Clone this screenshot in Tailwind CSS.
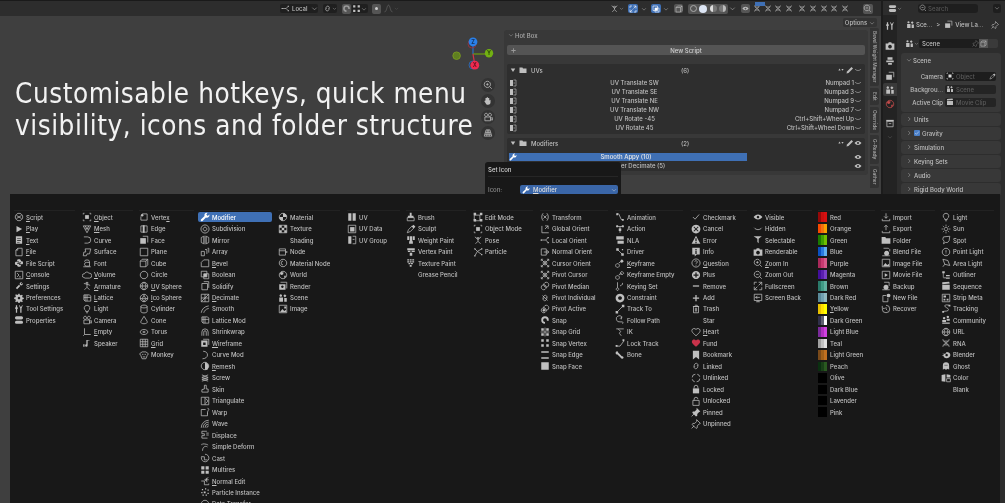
<!DOCTYPE html>
<html lang="en">
<head>
<meta charset="UTF-8" />
<title>Hot Box</title>
<script src="https://cdn.jsdelivr.net/npm/@tailwindcss/browser@4"></script>
</head>
<body class="bg-[#3f3f3f]">
<div class="relative w-[1005px] h-[503px] overflow-hidden flex bg-[#3f3f3f] text-[#bfbfbf] font-['Inter',sans-serif] font-medium text-[6px] blur-[0.35px]">

  <!-- 3d viewport -->
  <div class="w-[881px] h-full flex flex-col">
    <div class="h-[16px] shrink-0 flex items-center bg-[#2d2d2d] border-t border-[#1a1a1a]">
      <div class="ml-[280px] w-[38px] h-[9px] flex items-center gap-[2px] pl-[1px] bg-[#1f1f1f] rounded-[2px]">
        <span data-i="local" class="w-[9px] h-[9px]"></span><span class="flex-1">Local</span><span data-i="chev" class="w-[7px] h-[7px]"></span>
      </div>
      <div class="ml-[5px] w-[14px] h-[9px] flex items-center bg-[#1f1f1f] rounded-[2px]"><span data-i="linked" class="w-[9px] h-[9px]"></span><span data-i="chev" class="w-[5px] h-[5px]"></span></div>
      <div class="ml-[5px] w-[9px] h-[10px] flex items-center bg-[#555555] rounded-[2px] text-[#999999]"><span data-i="snap" class="w-[9px] h-[9px]"></span></div>
      <div class="ml-[1px] w-[16px] h-[9px] flex items-center bg-[#1f1f1f] rounded-[2px]"><span data-i="snapvertex" class="w-[9px] h-[9px]"></span><span data-i="chev" class="w-[6px] h-[6px]"></span></div>
      <div class="ml-[4px] w-[9px] h-[10px] flex items-center justify-center bg-[#555555] rounded-[2px]"><span class="w-[3px] h-[3px] rounded-full bg-[#cccccc]"></span></div>
      <div class="ml-[2px] text-[#666666] flex items-center"><span data-i="falloff" class="w-[11px] h-[9px]"></span><span data-i="chev" class="w-[5px] h-[5px]"></span></div>

      <div class="ml-[211px] flex items-center"><span data-i="pose" class="w-[9px] h-[9px]"></span><span data-i="chev" class="w-[5px] h-[5px]"></span></div>
      <div class="ml-[4px] w-[10px] h-[9px] bg-[#3f70b5] rounded-[2px] flex items-center justify-center text-white"><span data-i="fullscreen" class="w-[8px] h-[8px]"></span></div>
      <span data-i="chev" class="ml-[3px] w-[6px] h-[6px]"></span>
      <div class="ml-[4px] w-[10px] h-[9px] bg-[#3f70b5] rounded-[2px] flex items-center justify-center text-white"><span data-i="bool" class="w-[8px] h-[8px]"></span></div>
      <span data-i="chev" class="ml-[2px] w-[6px] h-[6px]"></span>
      <div class="ml-[5px] w-[9px] h-[9px] bg-[#555555] rounded-[2px] flex items-center justify-center"><span data-i="cube" class="w-[8px] h-[8px]"></span></div>
      <div class="ml-[5px] w-[40px] h-[10px] bg-[#545454] rounded-[2px] flex items-center justify-around px-[1px]">
        <span class="w-[7px] h-[7px] rounded-full border border-[#aaaaaa]"></span>
        <span class="w-[8px] h-[8px] rounded-full bg-[#dde6f5]"></span>
        <span class="w-[7px] h-[7px] rounded-full bg-[linear-gradient(90deg,#dddddd_50%,#777777_50%)]"></span>
        <span class="w-[7px] h-[7px] rounded-full bg-[linear-gradient(90deg,#777777_50%,#bbbbbb_50%)]"></span>
      </div>
      <span data-i="chev" class="ml-[1px] w-[7px] h-[7px]"></span>
      <div class="ml-[5px] w-[9px] h-[9px] bg-[#555555] rounded-[2px] flex items-center justify-center"><span data-i="visible" class="w-[7px] h-[7px]"></span></div>
      <div class="relative flex items-center ml-[3px] gap-[2.6px]">
        <span class="absolute left-[2px] -top-[1.5px] w-[10px] h-[4px] bg-[#3f70b5]"></span>
        <span data-i="rna" class="w-[8px] h-[11px]"></span><span data-i="rna" class="w-[8px] h-[11px]"></span><span data-i="rna" class="w-[8px] h-[11px]"></span><span data-i="rna" class="w-[8px] h-[11px]"></span>
        <span data-i="rna" class="ml-[3px] w-[8px] h-[11px]"></span><span data-i="rna" class="w-[8px] h-[11px]"></span><span data-i="rna" class="w-[8px] h-[11px]"></span><span data-i="rna" class="w-[8px] h-[11px]"></span><span data-i="rna" class="w-[8px] h-[11px]"></span>
      </div>
      <div class="ml-[14px] w-[10px] h-[10px] bg-[#555555] rounded-[2px] flex items-center justify-center"><span data-i="zoomout" class="w-[9px] h-[9px]"></span></div>
    </div>

    <div class="relative flex-1 flex min-h-0">
      <h1 class="w-[481px] shrink-0 pl-[15px] pt-[62px] text-[27.6px] leading-[32px] tracking-[0.55px] font-normal text-[#f2f2f2] font-['DejaVu_Sans_Condensed','DejaVu_Sans',sans-serif] whitespace-nowrap">Customisable hotkeys, quick menu<br>visibility, icons and folder structure</h1>

      <!-- navigation gizmo -->
      <svg class="absolute left-[450px] top-[18px] w-[46px] h-[40px]" viewBox="450 34 46 40">
        <path d="M473 54v-10" stroke="#2a70c8" stroke-width="1.2"/>
        <path d="M473 54h14" stroke="#6ea00f" stroke-width="1.2"/>
        <path d="M473 54l1.5 9" stroke="#d8324a" stroke-width="1.2"/>
        <circle cx="472" cy="44" r="4" fill="none" stroke="#a03040" stroke-width=".8"/>
        <circle cx="473" cy="65" r="4" fill="none" stroke="#2a70c8" stroke-width=".8"/>
        <circle cx="456.6" cy="55.7" r="3.8" fill="#5f7f20" stroke="#7ea020" stroke-width=".8"/>
        <circle cx="473" cy="41.8" r="4.4" fill="#2a80e8"/>
        <circle cx="489" cy="53.2" r="4.2" fill="#72b012"/>
        <circle cx="474.8" cy="65.2" r="4.4" fill="#f02a50"/>
        <text x="473" y="44" text-anchor="middle" font-size="5.5" font-weight="700" fill="#16315c">Z</text>
        <text x="489" y="55.2" text-anchor="middle" font-size="5.5" font-weight="700" fill="#2c4a08">Y</text>
        <text x="474.8" y="67.2" text-anchor="middle" font-size="5.5" font-weight="700" fill="#6a1020">X</text>
      </svg>

      <!-- viewport nav buttons -->
      <div class="w-[14px] shrink-0 pt-[62px] flex flex-col gap-[2px]">
        <span class="w-[14px] h-[14px] rounded-full bg-[#333333] flex items-center justify-center"><span data-i="zoomin" class="w-[10px] h-[10px]"></span></span>
        <span class="w-[14px] h-[14px] rounded-full bg-[#333333] flex items-center justify-center"><span data-i="hand" class="w-[10px] h-[10px]"></span></span>
        <span class="w-[14px] h-[14px] rounded-full bg-[#333333] flex items-center justify-center"><span data-i="camera" class="w-[10px] h-[10px]"></span></span>
        <span class="w-[14px] h-[14px] rounded-full bg-[#333333] flex items-center justify-center"><span data-i="persp" class="w-[10px] h-[10px]"></span></span>
      </div>

      <!-- n-panel -->
      <div class="ml-[9px] flex-1 min-w-0 flex flex-col">
        <div class="h-[14px] pt-[2px] flex justify-end pr-[4px] shrink-0">
          <div class="w-[34px] h-[9px] bg-[#333333] rounded-[2px] flex items-center justify-center gap-[2px]">Options<span data-i="chev" class="w-[6px] h-[6px]"></span></div>
        </div>
        <div class="flex gap-[2px]">
          <div class="w-[364px] h-[145px] bg-[#383838] rounded-[3px] px-[3px] flex flex-col">
            <div class="h-[15px] pb-[5px] flex items-center gap-[1px] pl-[1px] shrink-0 text-[#aaaaaa]"><span data-i="chev" class="w-[6px] h-[6px]"></span>Hot Box</div>
            <div class="h-[10px] shrink-0 bg-[#545454] rounded-[2px] flex items-center pl-[3px] text-[#d0d0d0]"><span data-i="add" class="w-[7px] h-[7px] text-[#999999]"></span><span class="flex-1 text-center pr-[10px]">New Script</span></div>

            <!-- UVs -->
            <div class="mt-[9px] h-[70px] shrink-0 bg-[#2e2e2e] rounded-[2px] flex flex-col">
              <div class="h-[14px] pb-[2px] flex items-center pl-[3px] pr-[3px] shrink-0">
                <span data-i="tridown" class="w-[6px] h-[6px]"></span><span data-i="folder" class="ml-[3px] w-[8px] h-[8px]"></span><span class="ml-[4px] w-[150px]">UVs</span><span>(6)</span>
                <span class="ml-auto flex items-center"><span data-i="updown" class="w-[8px] h-[6px]"></span><span data-i="pencil" class="ml-[1px] w-[8px] h-[8px]"></span><span data-i="hidden" class="w-[8px] h-[8px]"></span></span>
              </div>
              <div class="h-[9px] flex items-center pl-[2px] pr-[3px]"><span data-i="uvdoc" class="w-[8px] h-[8px]"></span><span class="w-[235px] text-center">UV Translate SW</span><span class="flex-1 text-right">Numpad 1</span><span data-i="hidden" class="w-[8px] h-[8px]"></span></div>
              <div class="h-[9px] flex items-center pl-[2px] pr-[3px]"><span data-i="uvdoc" class="w-[8px] h-[8px]"></span><span class="w-[235px] text-center">UV Translate SE</span><span class="flex-1 text-right">Numpad 3</span><span data-i="hidden" class="w-[8px] h-[8px]"></span></div>
              <div class="h-[9px] flex items-center pl-[2px] pr-[3px]"><span data-i="uvdoc" class="w-[8px] h-[8px]"></span><span class="w-[235px] text-center">UV Translate NE</span><span class="flex-1 text-right">Numpad 9</span><span data-i="hidden" class="w-[8px] h-[8px]"></span></div>
              <div class="h-[9px] flex items-center pl-[2px] pr-[3px]"><span data-i="uvdoc" class="w-[8px] h-[8px]"></span><span class="w-[235px] text-center">UV Translate NW</span><span class="flex-1 text-right">Numpad 7</span><span data-i="hidden" class="w-[8px] h-[8px]"></span></div>
              <div class="h-[9px] flex items-center pl-[2px] pr-[3px]"><span data-i="uvdoc" class="w-[8px] h-[8px]"></span><span class="w-[235px] text-center">UV Rotate -45</span><span class="flex-1 text-right">Ctrl+Shift+Wheel Up</span><span data-i="hidden" class="w-[8px] h-[8px]"></span></div>
              <div class="h-[9px] flex items-center pl-[2px] pr-[3px]"><span data-i="uvdoc" class="w-[8px] h-[8px]"></span><span class="w-[235px] text-center">UV Rotate 45</span><span class="flex-1 text-right">Ctrl+Shift+Wheel Down</span><span data-i="hidden" class="w-[8px] h-[8px]"></span></div>
            </div>

            <!-- Modifiers -->
            <div class="mt-[4px] h-[33px] shrink-0 bg-[#2e2e2e] rounded-[2px] flex flex-col">
              <div class="h-[14px] pb-[4px] flex items-center pl-[3px] pr-[3px] shrink-0">
                <span data-i="tridown" class="w-[6px] h-[6px]"></span><span data-i="folder" class="ml-[3px] w-[8px] h-[8px]"></span><span class="ml-[4px] w-[150px]">Modifiers</span><span>(2)</span>
                <span class="ml-auto flex items-center"><span data-i="updown" class="w-[8px] h-[6px]"></span><span data-i="pencil" class="ml-[1px] w-[8px] h-[8px]"></span><span data-i="visible" class="w-[8px] h-[8px]"></span></span>
              </div>
              <div class="h-[9px] flex items-center pl-[2px] pr-[3px]"><div class="w-[238px] h-[8px] bg-[#3f70b5] flex items-center text-[#e8e8e8]"><span data-i="wrench" class="w-[8px] h-[8px] text-white"></span><span class="flex-1 text-center pr-[12px]">Smooth Appy (10)</span></div><span data-i="visible" class="ml-auto w-[8px] h-[8px]"></span></div>
              <div class="h-[9px] flex items-center pl-[2px] pr-[3px]"><span class="w-[246px] text-center">Smoother Decimate (5)</span><span data-i="visible" class="ml-auto w-[8px] h-[8px]"></span></div>
            </div>
          </div>

          <!-- sidebar tabs -->
          <div class="w-[9px] flex flex-col gap-[2px] -mt-[2px] text-[#a8a8a8]">
            <div class="h-[58px] bg-[#333333] rounded-r-[2px] flex items-center justify-center"><span class="[writing-mode:vertical-rl] text-[4.8px] whitespace-nowrap">Bevel Weight Manager</span></div>
            <div class="h-[17px] bg-[#333333] rounded-r-[2px] flex items-center justify-center"><span class="[writing-mode:vertical-rl] text-[4.8px]">Edit</span></div>
            <div class="h-[26px] bg-[#333333] rounded-r-[2px] flex items-center justify-center"><span class="[writing-mode:vertical-rl] text-[4.8px]">Override</span></div>
            <div class="h-[29px] bg-[#333333] rounded-r-[2px] flex items-center justify-center"><span class="[writing-mode:vertical-rl] text-[4.8px] whitespace-nowrap">G-Ready</span></div>
            <div class="h-[22px] bg-[#333333] rounded-r-[2px] flex items-center justify-center"><span class="[writing-mode:vertical-rl] text-[4.8px]">Gather</span></div>
          </div>
        </div>
      </div>
    </div>
  </div>

  <!-- properties editor -->
  <div class="flex-1 min-w-0 flex flex-col border-l-2 border-[#1c1c1c] bg-[#2d2d2d]">
    <div class="h-[15px] shrink-0 flex items-center border-t border-[#1a1a1a]">
      <span data-i="props" class="ml-[5px] w-[9px] h-[9px]"></span><span data-i="chev" class="w-[5px] h-[5px]"></span>
      <div class="ml-[16px] w-[60px] h-[9px] bg-[#1e1e1e] rounded-[3px] flex items-center pl-[1px] gap-[1px] text-[#555555]"><span data-i="zoomout" class="w-[8px] h-[8px] text-[#bbbbbb]"></span>Search</div>
      <div class="ml-[15px] w-[8px] h-[9px] bg-[#1e1e1e] rounded-[2px] flex items-center justify-center"><span data-i="chev" class="w-[6px] h-[6px]"></span></div>
    </div>
    <div class="flex-1 flex min-h-0">
      <div class="w-[14px] shrink-0 bg-[#232323] flex flex-col items-center pt-[6px]">
        <span data-i="tools" class="h-[10px] w-[10px]"></span>
        <span class="h-[10px]"></span>
        <span data-i="renderable" class="h-[10px] w-[10px]"></span>
        <span class="h-[5px]"></span>
        <span data-i="printer" class="h-[10px] w-[10px]"></span>
        <span class="h-[5px]"></span>
        <span data-i="viewlayer" class="h-[10px] w-[10px]"></span>
        <span class="h-[2px] w-full"></span>
        <span class="w-full h-[13px] bg-[#3a3a3a] flex items-center justify-center rounded-l-[2px]"><span data-i="scene" class="h-[10px] w-[10px]"></span></span>
        <span class="h-[3px]"></span>
        <span data-i="world" class="h-[10px] w-[10px] text-[#c04a4a]"></span>
        <span class="h-[9px]"></span>
        <span data-i="archive" class="h-[10px] w-[10px]"></span>
        <span class="h-[6px]"></span>
        <span data-i="chev" class="h-[6px] w-[6px] text-[#666666]"></span>
      </div>
      <div class="flex-1 min-w-0 px-[4px] flex flex-col">
        <div class="h-[19px] mb-[4px] shrink-0 flex items-center pl-[5px] whitespace-nowrap">
          <span data-i="scene" class="w-[9px] h-[9px]"></span><span class="ml-[1px]">Sce...</span><span class="ml-[4px]">&gt;</span><span data-i="viewlayer" class="ml-[4px] w-[9px] h-[9px]"></span><span class="ml-[2px]">View La...</span><span data-i="unpinned" class="ml-auto mr-[2px] w-[8px] h-[8px]"></span>
        </div>
        <div class="h-[10px] shrink-0 flex items-center pl-[4px]">
          <span data-i="scene" class="w-[9px] h-[9px]"></span><span data-i="chev" class="w-[5px] h-[5px]"></span>
          <div class="w-[60px] h-[9px] bg-[#1d1d1d] rounded-l-[2px] flex items-center pl-[3px]">Scene<span data-i="unpinned" class="ml-auto w-[7px] h-[7px] text-[#777777]"></span></div>
          <div class="w-[9px] h-[9px] bg-[#555555] flex items-center justify-center"><span data-i="cube" class="w-[7px] h-[7px]"></span></div>
          <div class="w-[10px] h-[9px] bg-[#3a3a3a] rounded-r-[2px]"></div>
        </div>
        <div class="mt-[5px] h-[58.5px] shrink-0 bg-[#383838] rounded-[3px] flex flex-col">
          <div class="h-[16.5px] pb-[2px] flex items-center pl-[5px] gap-[1px]"><span data-i="chev" class="w-[6px] h-[6px]"></span>Scene</div>
          <div class="h-[13px] flex items-center"><span class="w-[44px] text-right pr-[2px]">Camera</span><div class="w-[51px] h-[9px] bg-[#1d1d1d] rounded-[2px] flex items-center pl-[1px] gap-[2px] text-[#5a5a5a]"><span data-i="object" class="w-[8px] h-[8px] text-[#dddddd]"></span>Object<span data-i="sculpt" class="ml-auto w-[7px] h-[7px] text-[#bbbbbb]"></span></div></div>
          <div class="h-[13px] flex items-center"><span class="w-[44px] text-right pr-[2px] whitespace-nowrap">Backgrou...</span><div class="w-[51px] h-[9px] bg-[#1d1d1d]/70 rounded-[2px] flex items-center pl-[1px] gap-[2px] text-[#5a5a5a]"><span data-i="scene" class="w-[8px] h-[8px] text-[#bbbbbb]"></span>Scene</div></div>
          <div class="h-[13px] flex items-center"><span class="w-[44px] text-right pr-[2px] whitespace-nowrap">Active Clip</span><div class="w-[51px] h-[9px] bg-[#1d1d1d]/70 rounded-[2px] flex items-center pl-[1px] gap-[2px] text-[#5a5a5a]"><span data-i="sequence" class="w-[8px] h-[8px] text-[#bbbbbb]"></span>Movie Clip</div></div>
        </div>
        <div class="mt-[1px] h-[13px] shrink-0 bg-[#383838] rounded-[3px] flex items-center pl-[5px] gap-[2px]"><span data-i="chevr" class="w-[6px] h-[6px]"></span>Units</div>
        <div class="mt-[1px] h-[13px] shrink-0 bg-[#383838] rounded-[3px] flex items-center pl-[5px] gap-[2px]"><span data-i="chevr" class="w-[6px] h-[6px]"></span><span class="w-[6px] h-[6px] bg-[#4a7fc8] rounded-[1px] flex items-center justify-center text-white"><span data-i="check" class="w-[6px] h-[6px]"></span></span>Gravity</div>
        <div class="mt-[1px] h-[13px] shrink-0 bg-[#383838] rounded-[3px] flex items-center pl-[5px] gap-[2px]"><span data-i="chevr" class="w-[6px] h-[6px]"></span>Simulation</div>
        <div class="mt-[1px] h-[13px] shrink-0 bg-[#383838] rounded-[3px] flex items-center pl-[5px] gap-[2px]"><span data-i="chevr" class="w-[6px] h-[6px]"></span>Keying Sets</div>
        <div class="mt-[1px] h-[13px] shrink-0 bg-[#383838] rounded-[3px] flex items-center pl-[5px] gap-[2px]"><span data-i="chevr" class="w-[6px] h-[6px]"></span>Audio</div>
        <div class="mt-[1px] h-[13px] shrink-0 bg-[#383838] rounded-[3px] flex items-center pl-[5px] gap-[2px]"><span data-i="chevr" class="w-[6px] h-[6px]"></span>Rigid Body World</div>
      </div>
    </div>
  </div>

  <!-- Set Icon dialog -->
  <div class="absolute left-[485px] top-[162px] w-[136px] h-[32px] bg-[#181818] rounded-t-[3px] px-[3px] flex flex-col">
    <div class="h-[15px] shrink-0 flex items-center border-b border-[#262626] text-[#d4d4d4]">Set Icon</div>
    <div class="mt-[8px] flex items-center"><span class="w-[32px] text-[#8a8a8a]">Icon:</span><div class="w-[98px] h-[9px] bg-[#3a66a8] rounded-[2px] flex items-center pl-[2px] gap-[3px] text-[#dddddd]"><span data-i="wrench" class="w-[8px] h-[8px] text-white"></span><span><u>M</u>odifier</span><span data-i="chev" class="ml-auto mr-[1px] w-[6px] h-[6px]"></span></div></div>
  </div>

  <!-- icon picker popup -->
  <div id="picker" class="absolute left-[10px] top-[194px] w-[990px] h-[309px] bg-[#181818] pl-[4px] pt-[15px] flex overflow-hidden"></div>
</div>

<script>
  // icons: 16x16 paths, "|" starts a new path, "!" means filled
  const icons = {
    chev:'M3 6l5 5 5-5', chevr:'M6 3l5 5-5 5', tridown:'!M2 4h12l-6 9z', updown:'!M1 9h6L4 4zM9 5h6l-3 5z',
    pencil:'!M11 2l3 3-9 9-4 1 1-4z', hand:'!M4 7V3h2v3V2h2v4V3h2v4l2-1v4c0 2-1 4-4 4-2 0-3-1-4-3L2 8z', persp:'M5 3h6l3 10H2zM4 7h8M3 10h10M7 3l-1 10M9 3l1 10',
    falloff:'M1 14c4 0 4-12 7-12s3 12 7 12', uvdoc:'!M2 2h6v12H2z|M9 2h5v12H9M9 8h3', printer:'!M4 2h8v4H4zM2 7h12v3H2zM5 11h6v3H5z', viewlayer:'M6 2h8v8|!M2 6h9v8H2z', archive:'!M2 3h12v3H2z|M3 6v8h10V6M6 9h4',
    local:'M2 8h7M9 8l4-4M9 8l4 4|!M1 7h2v2H1zM12 3h2v2h-2zM12 11h2v2h-2z',
    script:'M8 2a6 6 0 1 0 .01 0M4 5.5l8 5M4 10.5l8-5', play:'!M4 3l9 5-9 5z', text:'!M3 2h10v12H3zM5 5v1h6V5zM5 8v1h6V8zM5 11v1h4v-1z', file:'M6 2h7v12H3V5zM6 2v3H3',
    filescript:'!M8 2c-3 0-3 1-3 3h3v1H3c-2 0-2 5 0 5h2V9c0-1 1-2 2-2h3c1 0 1-1 1-1V4c0-1-1-2-3-2zM8 14c3 0 3-1 3-3H8v-1h5c2 0 2-5 0-5h-2v2c0 1-1 2-2 2H6c-1 0-1 1-1 1v2c0 1 1 2 3 2z',
    console:'M2 2h12v12H2zM5 5l3 3-3 3M8 11h3', settings:'!M3 11l5-5 2 2-5 5zM9 5a3 3 0 0 1 4-3l-2 2 1 1 2-2a3 3 0 0 1-3 4z',
    prefs:'!M7 1h2l.4 2 1.6.7 1.7-1.1 1.4 1.4-1.1 1.7.7 1.6 2 .4v2l-2 .4-.7 1.6 1.1 1.7-1.4 1.4-1.7-1.1-1.6.7-.4 2H7l-.4-2-1.6-.7-1.7 1.1-1.4-1.4 1.1-1.7-.7-1.6-2-.4V7l2-.4.7-1.6L1.9 3.3 3.3 1.9l1.7 1.1 1.6-.7zM8 6a2 2 0 1 0 .01 0z',
    tools:'!M3 2h2v3h1v3H5v6H3V8H2V5h1zM9 2l2 3 2-3h1l-2 5v7h-2V7L8 2z', props:'!M4 2h8a2.5 2.5 0 0 1 0 5H4a2.5 2.5 0 0 1 0-5zM4 9h8a2.5 2.5 0 0 1 0 5H4a2.5 2.5 0 0 1 0-5z',
    object:'M4 2H2v2M12 2h2v2M4 14H2v-2M12 14h2v-2|!M5 5h6v6H5z', mesh:'M2 3h12l-6 11zM5 3l3 5 3-5M5 8h6', curve:'M3 3h6a5 5 0 0 1 0 10H4', surface:'M5 3h9l-2 8H8l-1 3H2l1-6h3z', font:'M4 6a4 3 0 0 1 8 0v7H7a3 3 0 0 1 0-6h5M2 14h12',
    volume:'M3 12a3 3 0 0 1 1-6 4 4 0 0 1 7-1 4 4 0 0 1 1 8H5z', armature:'M8 2a1.5 1.5 0 1 0 .01 0M8 5L3 4M8 5l5 2M8 5v5l-4 4M8 10l4 4', lattice:'M3 3h9l2 2v8H5l-2-2zM3 7h11M8 3v10M5 13V3', light:'M8 2a4.5 4.5 0 0 0-2 8.5V12h4v-1.5A4.5 4.5 0 0 0 8 2zM6.5 14h3',
    camera:'M5 2a2.5 2.5 0 1 0 .01 0M11 2a2.5 2.5 0 1 0 .01 0M3 8h9v6H3zM12 10l3-1v4l-3-1', empty:'M4 2v10h10M4 12l-2 2', speaker:'!M7 3h5v1H9v8a2 2 0 1 1-2-2zM2 10h2v4H2z',
    vertex:'M5 3h8v10H3V7|!M3 5a2 2 0 1 1 4 0 2 2 0 0 1-4 0z', edge:'M3 3h10v10H3z|!M6 2h3v12H6z', face:'M6 2h8v10|!M2 5h9v9H2z', plane:'M2 2h12v12H2z', cube:'M2 5h9v9H2zM2 5l3-3h9v9l-3 3M11 5l3-3', circle:'M8 2a6 6 0 1 0 .01 0',
    uvsphere:'M8 2a6 6 0 1 0 .01 0M2 8h12M8 2c-4 3-4 9 0 12M8 2c4 3 4 9 0 12', ico:'M8 2a6 6 0 1 0 .01 0M8 4l3 5H5zM8 2v2M2 9h3M11 9h3M5 9l3 5 3-5', cyl:'M3 4c0-3 10-3 10 0v8c0 3-10 3-10 0zM3 4c0 3 10 3 10 0', cone:'M8 2l5 8c1 3-2 4-5 4s-6-1-5-4z', torus:'M8 4c8 0 8 8 0 8s-8-8 0-8M6 8c0 1 4 1 4 0s-4-1-4 0', grid:'M2 2h12v12H2zM2 6h12M2 10h12M6 2v12M10 2v12', monkey:'M5 3h6l4 3-2 3-2 5H5L3 9 1 6zM5 7h2M9 7h2M6 11h4',
    wrench:'!M11 1a4 4 0 0 0-3.7 5.5L1.5 12a1.8 1.8 0 0 0 2.5 2.5l5.5-5.8A4 4 0 0 0 15 4l-2.6 2.2L10 4l2.2-2.8A4 4 0 0 0 11 1z', subdiv:'M8 1.5a6.5 6.5 0 1 0 .01 0M8 5a3 3 0 1 0 .01 0', mirror:'M2 4l4-2v12l-4-2zM14 4l-4-2v12l4-2zM8 1v14', array:'M2 7h5v7H2zM8 4h3v7M12 2h2v7', bevel:'M6 3h8v11H2V7z', bool:'M2 2h9v9H2zM6 6h8v8H6z|!M6 6h5v5H6z', solid:'M3 4h9v10H3zM6 1h8v10', decimate:'M2 2h12v12H2zM2 14L14 2M8 2v6H2M14 8H8v6', smooth:'M2 14C3 8 7 4 14 3M6 14c1-3 3-6 8-7', shrink:'M3 14V8a5 5 0 0 1 10 0v6M6 14V8a2 2 0 0 1 4 0v6', wire:'M5 2h9v9|!M2 4h10v10H2zM5 7v4h4V7z', curvemod:'M5 2c5 0 7 3 7 6s-3 6-8 6', remesh:'M8 2a6 6 0 1 0 .01 0|!M8 2v12h4l2-6-2-4z', screw:'M3 3l10 4-10 3 10 3M13 3L3 7l10 3-10 3', skin:'M7 2h3v6h3v5H3V9l4-1z', triang:'M2 2h12v12H2zM8 2v12|M9 4l4 4-4 4', warp:'M9 4H2v10h10V8M12 2a2 2 0 0 1 2 2c0 1.5-2 2-2 4M12 10v1', wave:'M2 14A12 12 0 0 1 14 2M5 14a9 9 0 0 1 9-9M8 14a6 6 0 0 1 6-6M11 14a3 3 0 0 1 3-3', displace:'M3 2h8M3 2v4h4v3H3v4h9M10 5h4M10 8h4', simple:'M4 3c5 0 8 1 9 2M4 14c0-5 3-7 5-7s3 1 3 1M3 3v2', cast:'M8 2a6 6 0 1 1-5 3M3 6h4v5h5', multires:'!M2 2h5v5H2zM9 2h5v5H9zM2 9h5v5H2zM9 9h5v5H9z', normaledit:'M2 8h5v6h7v-2M8 8l5-6M10 3l1 7M7 6h7', particleinst:'!M3 3h2v2H3zM8 2h2v2H8zM12 4h2v2h-2zM2 8h2v2H2zM6 7h3v3H6zM12 9h2v2h-2zM4 12h2v2H4zM9 12h2v2H9z',
    material:'M8 2a6 6 0 1 0 .01 0|!M8 2a6 6 0 0 1 6 6H8v6a6 6 0 0 1-6-6h6z', texture:'M2 2h12v12H2z|!M2 2h4v4H2zM10 2h4v4h-4zM6 6h4v4H6zM2 10h4v4H2zM10 10h4v4h-4z', node:'M2 3h10v10H2zM2 6h10|!M12 7h3v2h-3z', matnode:'M8 2a6 6 0 1 0 .01 0M8 5a3 3 0 0 0 0 6', world:'M8 2a6 6 0 1 0 .01 0|!M5 3l4 1-1 3-3 1-2-2zM10 9h3l-2 4-1-1z', render:'M4 2h10v10|!M2 5h10v9H2zM7 7a2 2 0 1 0 .01 0z', scene:'!M11 2l2.5 2.5L11 7 8.5 4.5zM4.5 2a2 2 0 1 1-.1 0zM2 7h6v7H2zM10 8h4v6h-4z', image:'M2 2h12v12H2z|!M3 13l4-5 3 3 3-2v4zM10 4h3v3h-3z',
    uv:'!M2 2h5v12H2zM9 2h5v12H9z', uvdata:'M2 2h12v12H2z|!M5 5h7v7H5z', uvgroup:'M9 2h5v12H9M9 7h3|!M2 2h5v12H2z',
    brush:'M2 9h11v5H2z|!M6 1h3v5H6zM3 6h9v3H3z', sculpt:'M2 14l2-5 6-6 3 3-6 6z|!M9 4l3-3 3 3-3 3z', weight:'!M2 2h3v6H2zM6 2h4v8H6zM11 2h3v6h-3zM5 10h6v4H5z', vertexpaint:'!M2 2h12v3H2zM3 6h4v2H3zM9 6h5v2H9zM6 9h4v5H6z', texpaint:'!M2 2h3v2H2zM6 2h3v2H6zM10 2h3v2h-3zM2 5h3v2H2zM6 5h3v2H6zM10 5h3v2h-3zM4 8h3v2H4zM8 8h3v2H8zM6 11h3v3H6z',
    editmode:'M2 5h9v9H2z|!M1 1h4v4H1zM11 1h4v4h-4zM1 11h4v4H1zM11 11h4v4h-4z', pose:'M8 4a1.5 1.5 0 1 0 .01 0M3 3l5 4 5-4M8 7v3l-4 4M8 10l4 4', particle:'M3 3l4 4-4 7M7 7l7 5M14 3L7 7|!M2 2h2v2H2zM13 2h2v2h-2zM2 13h2v2H2zM13 11h2v2h-2z',
    transform:'M5 2C2 5 2 11 5 14M11 2c3 3 3 9 0 12M5.5 5.5l5 5M10.5 5.5l-5 5', global:'M3 14V3M3 14h11M8 3h5v5M8 8l5-5', localo:'M2 8h7M9 8l4-4M9 8l4 4|!M1 7h2v2H1zM12 3h2v2h-2zM12 11h2v2h-2z', normal:'M2 3h8v10H2zM6 8h8M11 5l3 3-3 3', cursoro:'M2 2l12 12M14 2L2 14M5 2H2v3M11 2h3v3M2 11v3h3M14 11v3h-3M8 5a3 3 0 1 0 .01 0', median:'M10 2a4 4 0 1 0 .01 0M6 6a4 4 0 1 0 .01 0', indiv:'M6 9a3 3 0 0 1 0-4l1-1a3 3 0 0 1 4 4M10 7a3 3 0 0 1 0 4l-1 1a3 3 0 0 1-4-4M4 4l8 8', active:'M10 2a4 4 0 1 0 .01 0M6 6a4 4 0 1 0 .01 0|!M6 8a2 2 0 1 0 .01 0z',
    snap:'!M2 8a6 6 0 0 1 12 0v1h-3V8a3 3 0 0 0-6 0c0 2 1 3 3 3v3a6 6 0 0 1-6-6z', snapgrid:'M8 1v14M1 8h14|!M2 2h4v4H2zM10 2h4v4h-4zM2 10h4v4H2zM10 10h4v4h-4z', snapvertex:'!M2 2h4v4H2zM10 2h4v4h-4zM2 10h4v4H2zM10 10h4v4h-4z', snapedge:'!M2 2h12v2.5H2zM2 11.5h12V14H2z', snapface:'!M2 2h12v12H2z',
    anim:'M3 3h3l4 9h3|!M2 2h3v3H2zM11 11h3v3h-3z', action:'M2 4h12M8 4v10|!M2 2h3v3H2zM11 2h3v3h-3zM6 7h4v4H6z', nla:'!M2 2h12v5H2zM4 9h10v5H4z', driver:'M4 4l8 8|!M2 2h4v4H2zM10 10h4v4h-4zM11 3h2v2h-2z', keyframe:'M4 9a3 3 0 1 0 .01 0M6 8l6-4|!M11 2l3 3-3 3-3-3z', kfempty:'M4 9a3 3 0 1 0 .01 0M6 8l5-3M11 2l3 3-3 3-3-3z', keyset:'M4 2v9M4 11a2 2 0 1 0 .01 0M8 8l3-2M12 3v3', constraint:'!M8 1a7 7 0 1 0 .01 0zM8 5a3 3 0 1 0 .01 0z', trackto:'M3 13L13 3|!M1 11h4v4H1zM11 1h4v4h-4z', follow:'M11 3a5 5 0 1 0-3 8h4a2 2 0 0 1 0 3M8 6l3-3-1 4', ik:'M2 3h12M5 3l4 4-2 3 3 4', locktrack:'M2 13h6M8 13l6-8|!M12 2h3v3h-3zM1 11h3v3H1z', bone:'!M3 2a2 2 0 0 1 2 2l6 6a2 2 0 1 1-1 3L4 7a2 2 0 1 1-1-5z',
    check:'M3 8l3.5 3.5L13 4', cancel:'!M8 1a7 7 0 1 0 .01 0zM5 4L4 5l3 3-3 3 1 1 3-3 3 3 1-1-3-3 3-3-1-1-3 3z', error:'!M8 1l7 13H1zM7 5v5h2V5zM7 11v2h2v-2z', info:'!M2 1h12v11H9l-3 3v-3H2zM7 3v2h2V3zM7 6v5h2V6z', question:'M8 1.5a6.5 6.5 0 1 0 .01 0M6 6a2 2 0 1 1 3 2c-1 .5-1 1-1 2M8 11.5v1', plus:'!M8 1.5a6.5 6.5 0 1 0 .01 0zM7 4v3H4v2h3v3h2V9h3V7H9V4z', remove:'!M3 7h10v2H3z', add:'!M7 3h2v4h4v2H9v4H7V9H3V7h4z', trash:'M4 4h8v10H4zM3 4h10M6 2h4v2M7 6v6M9 6v6', heart:'M8 14C2 9 1 7 1.5 5c.5-3 5-3.5 6.5-1 1.5-2.5 6-2 6.5 1 .5 2-.5 4-6.5 9z', fund:'!M8 14C2 9 1 7 1.5 5c.5-3 5-3.5 6.5-1 1.5-2.5 6-2 6.5 1 .5 2-.5 4-6.5 9z', bookmark:'!M3 1h10v14l-5-4-5 4z', linked:'M6 9a3 3 0 0 1 0-4l1-1a3 3 0 0 1 4 4M10 7a3 3 0 0 1 0 4l-1 1a3 3 0 0 1-4-4', unlinked:'M2 7a5 5 0 0 1 5-5M10 2a5 5 0 0 1 4 4M14 9a5 5 0 0 1-5 5M6 14a5 5 0 0 1-4-4', locked:'M5 7V5a3 3 0 0 1 6 0v2|!M3 7h10v8H3z', unlocked:'M3 7h10v8H3zM5 7V5a3 3 0 0 1 6 0', pinned:'M5 11l-4 4|!M9 1l6 6-2 1-3 3v3l-2 1-6-6 1-2h3l3-3z', unpinned:'M5 11l-4 4M9 1l6 6-2 1-3 3v3l-2 1-6-6 1-2h3l3-3z',
    visible:'!M8 4c3 0 5 2 7 4-2 2-4 4-7 4s-5-2-7-4c2-2 4-4 7-4zM8 6a2 2 0 1 0 .01 0z', hidden:'M2 6c3 4 9 4 12 0', selectable:'!M1 2h13L9 6v7l-2-2V6z', renderable:'!M5 4l1-2h4l1 2h4v10H1V4zM8 6a3 3 0 1 0 .01 0z', zoomin:'M7 2a5 5 0 1 0 .01 0M11 11l3 3M5 7h4M7 5v4', zoomout:'M7 2a5 5 0 1 0 .01 0M11 11l3 3M5 7h4', fullscreen:'M9 2h5v5M2 9v5h5M14 2L9 7M2 14l5-5M2 6V2h4M14 10v4h-4', screenback:'M2 2h12v10H2zM8 12v2M5 14h6M7 5L4 7l3 2M4 7h7',
    importf:'M8 2v8M5 7l3 3 3-3M2 11v3h12v-3', exportf:'M8 10V2M5 5l3-3 3 3M2 11v3h12v-3', folder:'!M1 3h6l1 2h7v9H1z', blendfile:'M4 2h8l2 2v3M2 14h12|!M9 6a4 4 0 1 0 .01 0z', imagefile:'M2 2h12v12H2z|!M3 13l4-5 3 3 3-2v4z', moviefile:'M2 2h12v12H2z|!M6 5l5 3-5 3z', backup:'M5 2h8v6M2 14h12|!M8 6a4 4 0 1 0 .01 0z', newfile:'M3 14V4h5M3 14h8V8|!M12 1a3 3 0 1 0 .01 0z', recover:'M8 2a6 6 0 1 1-6 6M2 3v4h4M8 5v3l2 2',
    sun:'M8 5a3 3 0 1 0 .01 0M8 1v2M8 13v2M1 8h2M13 8h2M3 3l1.5 1.5M11.5 11.5L13 13M3 13l1.5-1.5M11.5 4.5L13 3', spot:'M4 3l10-1-1 7a5 5 0 0 1-6 3l-3 2 1-4a5 5 0 0 1-1-7z', pointlight:'M8 2a6 6 0 1 0 .01 0M8 5v4M8 10.5v1', arealight:'M3 2l8 2 3 8-8-2zM6 10l-3 4', outliner:'!M2 2h4v3H2zM8 8h6v2H8zM8 12h6v2H8zM3 5h1v8h4v-1H3z', sequence:'!M2 6h12v8H2zM2 2l11-1 1 3-12 1z', stripmeta:'M2 2h12v12H2z|!M4 4h4v3H4zM9 9h3v3H9zM4 9h3v3H4z', tracking:'M3 12c4-1 9 0 9-3S6 6 6 3s6-1 7-1|!M2 11h3v3H2zM12 1h3v3h-3z', community:'!M5 3a2 2 0 1 1-.1 0zM11 1a2 2 0 1 1-.1 0zM2 8h6v3H2zM9 6h5v3H9zM2 12h12v2H2z', rna:'M3 2c0 5 10 7 10 12M13 2c0 5-10 7-10 12M4 5h8M4 11h8', blender:'!M9 3c3 0 6 2 6 5s-3 5-6 5-5-2-5-4H1l4-2-3-1h5l2-3zM9 6a2 2 0 1 0 .01 0z', ghost:'!M3 14V7a5 5 0 0 1 10 0v7l-2-1.5L8 14l-3-1.5zM6 6v2h1V6zM9 6v2h1V6z', color:'M9 9h6v5H9z|!M1 3l6-1v12l-6-1zM9 2l6 1v4H9z'
  };

  function svg(key) {
    const parts = (icons[key] || '').split('|').map(p => p[0] === '!'
      ? `<path d="${p.slice(1)}" fill="currentColor" fill-rule="evenodd"/>`
      : `<path d="${p}" fill="none" stroke="currentColor" stroke-width="1.2"/>`);
    return `<svg viewBox="0 0 16 16" class="block w-full h-full">${parts.join('')}</svg>`;
  }

  // [column width, [label, icon] ...]; "_x" underlines a letter
  const cols = [
    [68, ['_Script','script'],['_Play','play'],['_Text','text'],['_File','file'],['File Script','filescript'],['_Console','console'],['Settings','settings'],['Preferences','prefs'],['Tool Settings','tools'],['Properties','props']],
    [57, ['_Object','object'],['_Mesh','mesh'],['Curve','curve'],['Surface','surface'],['Font','font'],['_Volume','volume'],['_Armature','armature'],['_Lattice','lattice'],['Light','light'],['Camera','camera'],['_Empty','empty'],['Speaker','speaker']],
    [61, ['Verte_x','vertex'],['Edge','edge'],['Face','face'],['Plane','plane'],['Cube','cube'],['Circle','circle'],['_UV Sphere','uvsphere'],['_Ico Sphere','ico'],['Cylinder','cyl'],['Cone','cone'],['Torus','torus'],['_Grid','grid'],['Monkey','monkey']],
    [78, ['Modifier','wrench'],['Subdivision','subdiv'],['Mirror','mirror'],['Array','array'],['_Bevel','bevel'],['Boolean','bool'],['Solidify','solid'],['_Decimate','decimate'],['Smooth','smooth'],['Lattice Mod','lattice'],['Shrinkwrap','shrink'],['_Wireframe','wire'],['Curve Mod','curvemod'],['_Remesh','remesh'],['Screw','screw'],['Skin','skin'],['Triangulate','triang'],['Warp','warp'],['Wave','wave'],['Displace','displace'],['Simple Deform','simple'],['Cast','cast'],['Multires','multires'],['_Normal Edit','normaledit'],['Particle Instance','particleinst'],['Data Transfer','circle']],
    [69, ['Material','material'],['Texture','texture'],['Shading',''],['Node','node'],['Material Node','matnode'],['World','world'],['Render','render'],['Scene','scene'],['Image','image']],
    [59, ['UV','uv'],['UV Data','uvdata'],['UV Group','uvgroup']],
    [67, ['Brush','brush'],['Sculpt','sculpt'],['Weight Paint','weight'],['Vertex Paint','vertexpaint'],['Texture Paint','texpaint'],['Grease Pencil','']],
    [67, ['Edit Mode','editmode'],['Ob_ject Mode','object'],['Pose','pose'],['Particle','particle']],
    [75, ['Transform','transform'],['Global Orient','global'],['Local Orient','localo'],['Normal Orient','normal'],['Cursor Orient','cursoro'],['Pivot Cursor','cursoro'],['Pivot Median','median'],['Pivot Individual','indiv'],['Pivot Active','active'],['Snap','snap'],['Snap Grid','snapgrid'],['Snap Vertex','snapvertex'],['Snap Edge','snapedge'],['Snap Face','snapface']],
    [76, ['Animation','anim'],['Action','action'],['NLA','nla'],['Driver','driver'],['_Keyframe','keyframe'],['Keyframe Empty','kfempty'],['Keying Set','keyset'],['Constraint','constraint'],['Track To','trackto'],['Follow Path','follow'],['IK','ik'],['Lock Track','locktrack'],['Bone','bone']],
    [62, ['Checkmark','check'],['Cancel','cancel'],['Error','error'],['Info','info'],['_Question','question'],['Plus','plus'],['Remove','remove'],['Add','add'],['Trash','trash'],['Star',''],['_Heart','heart'],['Fund','fund#'],['Bookmark','bookmark'],['Linked','linked'],['Unlinked','unlinked'],['Locked','locked'],['Unlocked','unlocked'],['Pinned','pinned'],['Unpinned','unpinned']],
    [65, ['Visible','visible'],['Hidden','hidden'],['Selectable','selectable'],['Renderable','renderable'],['_Zoom In','zoomin'],['Zoom Out','zoomout'],['Fullscreen','fullscreen'],['Screen Back','screenback']],
    [63],
    [60, ['Import','importf'],['Export','exportf'],['Folder','folder'],['Blend File','blendfile'],['Image File','imagefile'],['Movie File','moviefile'],['Backup','backup'],['New File','newfile'],['Recover','recover']],
    [59, ['Light','light'],['Sun','sun'],['Spot','spot'],['Point Light','pointlight'],['Area Light','arealight'],['Outliner','outliner'],['Sequence','sequence'],['Strip Meta','stripmeta'],['Tracking','tracking'],['Community','community'],['URL','uvsphere'],['RNA','rna'],['Blender','blender'],['Ghost','ghost'],['Color','color'],['Blank','']]
  ];

  const swatches = [
    ['Red','#960909','#c80f0f','#d81010'],['Orange','#f74a00','#f27010','#f8a000'],['Green','#1a7a00','#3fa000','#70c000'],['Blue','#0a50c0','#2a7ae0','#60b0f0'],
    ['Purple','#a9295a','#c83a70','#d85a8a'],['Magenta','#430f9c','#5a1fb0','#7a40c8'],['Brown','#2a7a6a','#3f9a85','#60b0a0'],['Dark Red','#5a8a9a','#70a0b0','#90b8c0'],
    ['_Yellow','#e8c000','#ffe000','#ffff00'],['Dark Green','#30304a','#606070','#ffffff'],['Light Blue','#7a2a9a','#b030c0','#d040e0'],['Teal','#a0a0a0','#c0c0c0','#e0e0e0'],
    ['Light Green','#7a4a1a','#a0601a','#c07020'],['Peach','#0a3010','#1a4018','#2a5a20'],['Olive','#000','#000','#000'],['Dark Blue','#000','#000','#000'],['Lavender','#000','#000','#000'],['Pink','#000','#000','#000']
  ];

  const label = s => `<span>${s.replace(/_(.)/, '<u>$1</u>')}</span>`;

  function row(name, key) {
    const color = key === 'fund#' ? ' text-[#c8324a]' : '';
    const icon = key ? svg(key.replace('#', '')) : '';
    if (name === 'Modifier') {
      return `<div class="h-[11.47px] flex items-center"><div class="-ml-[2px] w-[74px] h-[10px] pl-[2px] flex items-center gap-[2px] bg-[#3f70b5] rounded-[2px] text-white"><span class="w-[10px] h-[10px] shrink-0">${icon}</span>${label(name)}</div></div>`;
    }
    return `<div class="h-[11.47px] flex items-center gap-[2px] whitespace-nowrap"><span class="w-[10px] h-[10px] shrink-0 text-[#cccccc]${color}">${icon}</span>${label(name)}</div>`;
  }

  const picker = document.getElementById('picker');
  cols.forEach(c => {
    const [w, ...items] = c;
    let body = items.map(([n, k]) => row(n, k)).join('');
    if (!items.length) {
      body = swatches.map(([n, a, b, d]) => `<div class="h-[11.47px] flex items-center gap-[3px] whitespace-nowrap"><span class="w-[9px] h-[9.5px] shrink-0" style="background:linear-gradient(90deg,${a} 33%,${b} 33% 66%,${d} 66%)"></span>${label(n)}</div>`).join('');
    }
    picker.insertAdjacentHTML('beforeend', `<div class="shrink-0 pt-[1.5px]" style="width:${w}px"><div class="w-[90%] border-t border-[#222222] -mt-[1px] mb-[1px]"></div>${body}</div>`);
  });

  document.querySelectorAll('[data-i]').forEach(el => {
    el.classList.add('inline-block', 'shrink-0');
    el.innerHTML = svg(el.dataset.i);
  });
</script>
</body>
</html>
